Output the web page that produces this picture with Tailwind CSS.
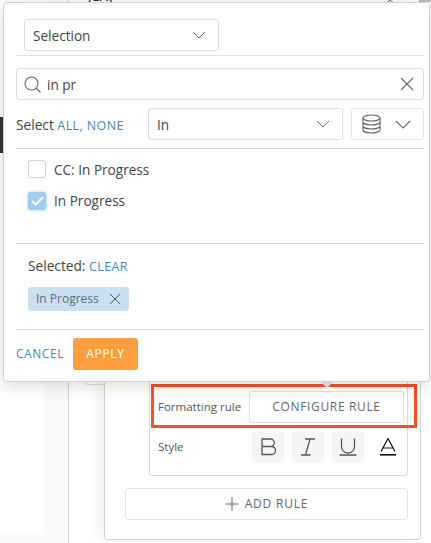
<!DOCTYPE html>
<html lang="en">
<head>
    <meta charset="UTF-8">
    <title>Filter</title>
    <script src="https://cdn.jsdelivr.net/npm/@tailwindcss/browser@4"></script>
</head>
<body class="font-['Open_Sans',sans-serif] bg-white overflow-hidden">
    <div class="relative w-[431px] h-[543px] overflow-hidden">
        <!-- Page behind the dialog -->
        <div class="flex h-full">
            <div class="w-[44px] flex flex-col">
                <div class="h-[533px] bg-white"></div>
                <div class="flex-1 bg-[#fafafa]"></div>
            </div>
            <div class="w-[24px] bg-[#fafafa]"></div>
            <div class="w-px bg-[#cfcfcf]"></div>
            <div class="flex-1 pl-[35px] pt-[340px]">
                <div class="w-[317px] h-[200px] bg-white border border-[#d4d4d4] rounded-b-[3px] shadow-[-6px_0_12px_rgba(0,0,0,0.05)] pt-[34px] pl-[20px]">
                    <!-- Rule card -->
                    <div class="ml-[24px] w-[259px] h-[101px] border border-[#d8d8d8] rounded-[3px] pt-[15px] pl-[8px] pr-[3px] flex flex-col gap-[8px]">
                        <div class="flex items-center h-[32px]">
                            <span class="w-[91px] text-[11.5px] text-[#555]">Formatting rule</span>
                            <button class="flex-1 h-full border border-[#e2e2e2] rounded-[3px] text-[12px] tracking-[0.65px] text-[#666]">CONFIGURE RULE</button>
                        </div>
                        <div class="flex items-center h-[32px]">
                            <span class="w-[94px] text-[11.5px] text-[#555]">Style</span>
                            <div class="flex gap-[8px]">
                                <div class="w-[32px] h-[32px] rounded-[3px] bg-[#f5f5f5] flex items-center justify-center">
                                    <svg width="15" height="18" viewBox="0 0 15 18" fill="none" stroke="#555" stroke-width="1.3"><path d="M1 1h8.500a3.700 3.700 0 0 1 0 7.500H1zM1 8.500h9.500a4 4 0 0 1 0 8H1z"/></svg>
                                </div>
                                <div class="w-[32px] h-[32px] rounded-[3px] bg-[#f5f5f5] flex items-center justify-center">
                                    <svg width="16" height="18" viewBox="0 0 16 18" fill="none" stroke="#555" stroke-width="1.3"><path d="M5 1h10M1 17h9.500M10 1 5.500 17"/></svg>
                                </div>
                                <div class="w-[32px] h-[32px] rounded-[3px] bg-[#f5f5f5] flex items-center justify-center">
                                    <svg width="18" height="18" viewBox="0 0 18 18" fill="none" stroke="#555" stroke-width="1.3"><path d="M2.500 0.500v8a6.500 6.500 0 0 0 13 0v-8M0.500 17h17"/></svg>
                                </div>
                                <div class="w-[32px] h-[32px] flex items-center justify-center">
                                    <svg width="18" height="18" viewBox="0 0 18 18" fill="none" stroke="#111" stroke-width="1.2"><path d="M2 13.500 9 0.500l7 13M4 10h10"/><path d="M1 16.800h16" stroke-width="1.6"/></svg>
                                </div>
                            </div>
                        </div>
                    </div>
                    <button class="mt-[12px] w-[283px] h-[32px] border border-[#e2e2e2] rounded-[3px] flex items-center justify-center gap-[6px] text-[12px] tracking-[0.8px] text-[#666]">
                        <svg width="14" height="14" viewBox="0 0 14 14" fill="none" stroke="#666" stroke-width="1"><path d="M7 0.500v13M0.500 7h13"/></svg>
                        ADD RULE
                    </button>
                </div>
            </div>
        </div>

        <!-- Bits of the page that show round the dialog -->
        <div class="absolute left-[88px] top-[-13px] text-[13px] font-semibold text-[#333]">[EA]</div>
        <svg class="absolute left-[385px] top-0" width="10" height="3" viewBox="0 0 10 3" fill="none" stroke="#666" stroke-width="1"><path d="M1 3 5 0l4 3"/></svg>
        <div class="absolute left-0 top-[117px] w-[3px] h-[36px] bg-[#333]"></div>
        <div class="absolute right-0 top-0 w-[12px] h-[2px] bg-[#bbb]"></div>
        <div class="absolute left-[85px] top-[378px] w-[20px] h-[7px] border border-[#d8d8d8] rounded-[3px] bg-white"></div>

        <!-- Highlight round the formatting rule row -->
        <div class="absolute left-[151px] top-[384px] w-[266px] h-[44px] border-[3px] border-[#f4512c]"></div>
        <div class="absolute left-[321px] top-[382px] w-0 h-0 border-x-[6px] border-x-transparent border-t-[6px] border-t-[#e8e8e8]"></div>

        <!-- Filter dialog -->
        <div class="absolute left-[3px] top-[2px] w-[427px] h-[380px] bg-white border border-[#d0d0d0] rounded-[4px] shadow-[0_4px_18px_rgba(0,0,0,0.14)] pl-[12px] pr-[5px] pt-[16px] text-[#444]">
            <div class="pl-[8px]">
                <div class="w-[195px] h-[32px] border border-[#dcdcdc] rounded-[3px] flex items-center justify-between pl-[8px] pr-[12px] text-[13.6px]">
                    <span class="mt-[2px]">Selection</span>
                    <svg width="14" height="8" viewBox="0 0 14 8" fill="none" stroke="#666" stroke-width="1"><path d="M1 1l6 6 6-6"/></svg>
                </div>
            </div>
            <div class="mt-[4px] h-px bg-[#e2e2e2]"></div>

            <div class="mt-[12px] h-[32px] border border-[#dcdcdc] rounded-[3px] flex items-center pl-[7px] pr-[9px] text-[13.6px]">
                <svg width="17" height="17" viewBox="0 0 17 17" fill="none" stroke="#666" stroke-width="1.1"><circle cx="7.500" cy="7.500" r="6.500"/><path d="M12 12l4.500 4.500"/></svg>
                <span class="ml-[6px] mt-[2px] flex-1">in pr</span>
                <svg width="14" height="14" viewBox="0 0 14 14" fill="none" stroke="#666" stroke-width="1.1"><path d="M1 1l12 12M13 1 1 13"/></svg>
            </div>

            <div class="mt-[8px] flex items-center h-[32px]">
                <div class="w-[132px] mt-[2px] text-[13.7px] whitespace-nowrap">Select <span class="text-[12.5px] text-[#4a87b5] tracking-[0.4px]">ALL, NONE</span></div>
                <div class="w-[195px] h-full border border-[#dcdcdc] rounded-[3px] flex items-center justify-between pl-[8px] pr-[12px] text-[13.6px]">
                    <span class="mt-[2px]">In</span>
                    <svg width="14" height="8" viewBox="0 0 14 8" fill="none" stroke="#666" stroke-width="1"><path d="M1 1l6 6 6-6"/></svg>
                </div>
                <div class="ml-[8px] flex-1 h-full border border-[#e6e6e6] rounded-[3px] flex items-center justify-between pl-[10px] pr-[12px]">
                    <svg width="19" height="20" viewBox="0 0 19 20" fill="none" stroke="#666" stroke-width="1.2"><ellipse cx="9.500" cy="4" rx="8.500" ry="3"/><path d="M1 4v12c0 1.700 3.800 3 8.500 3s8.500-1.300 8.500-3V4M1 8c0 1.700 3.800 3 8.500 3S18 9.700 18 8M1 12c0 1.700 3.800 3 8.500 3s8.500-1.300 8.500-3"/></svg>
                    <svg width="16" height="9" viewBox="0 0 16 9" fill="none" stroke="#666" stroke-width="1.1"><path d="M1 1l7 7 7-7"/></svg>
                </div>
            </div>
            <div class="mt-[8px] h-px bg-[#d8d8d8]"></div>

            <div class="mt-[11px] pl-[12px] flex flex-col gap-[14px] text-[13.6px]">
                <label class="flex items-center h-[18px] gap-[8px]">
                    <span class="w-[18px] h-[18px] border border-[#cfcfcf] rounded-[3px] bg-white"></span>
                    <span class="mt-[2px]">CC: In Progress</span>
                </label>
                <label class="flex items-center h-[18px] gap-[8px]">
                    <span class="w-[18px] h-[18px] rounded-[3px] bg-[#9fcdf0] shadow-[0_0_0_1.5px_#dcecf9] flex items-center justify-center">
                        <svg width="13" height="10" viewBox="0 0 13 10" fill="none" stroke="#fff" stroke-width="2"><path d="M1 5l3.800 3.500L12 1"/></svg>
                    </span>
                    <span class="mt-[1px]">In Progress</span>
                </label>
            </div>
            <div class="mt-[33px] h-px bg-[#d8d8d8]"></div>

            <div class="mt-[13px] pl-[12px] text-[13.7px] leading-[17px]">Selected: <span class="text-[12.5px] text-[#4a87b5] tracking-[0.4px]">CLEAR</span></div>
            <div class="mt-[12px] ml-[12px] w-[101px] h-[24px] bg-[#c9e0f3] rounded-[3px] flex items-center justify-between pl-[8px] pr-[8px] text-[12px] text-[#5d6b76]">
                <span>In Progress</span>
                <svg width="12" height="12" viewBox="0 0 12 12" fill="none" stroke="#556" stroke-width="1"><path d="M1 1l10 10M11 1 1 11"/></svg>
            </div>
            <div class="mt-[18px] h-px bg-[#e2e2e2]"></div>

            <div class="mt-[8px] flex items-center">
                <span class="text-[12px] tracking-[0.55px] text-[#4a87b5]">CANCEL</span>
                <button class="ml-[9px] w-[65px] h-[32px] bg-[#fd9f3e] rounded-[3px] text-[12px] font-medium tracking-[0.7px] text-white">APPLY</button>
            </div>
        </div>
    </div>
</body>
</html>
